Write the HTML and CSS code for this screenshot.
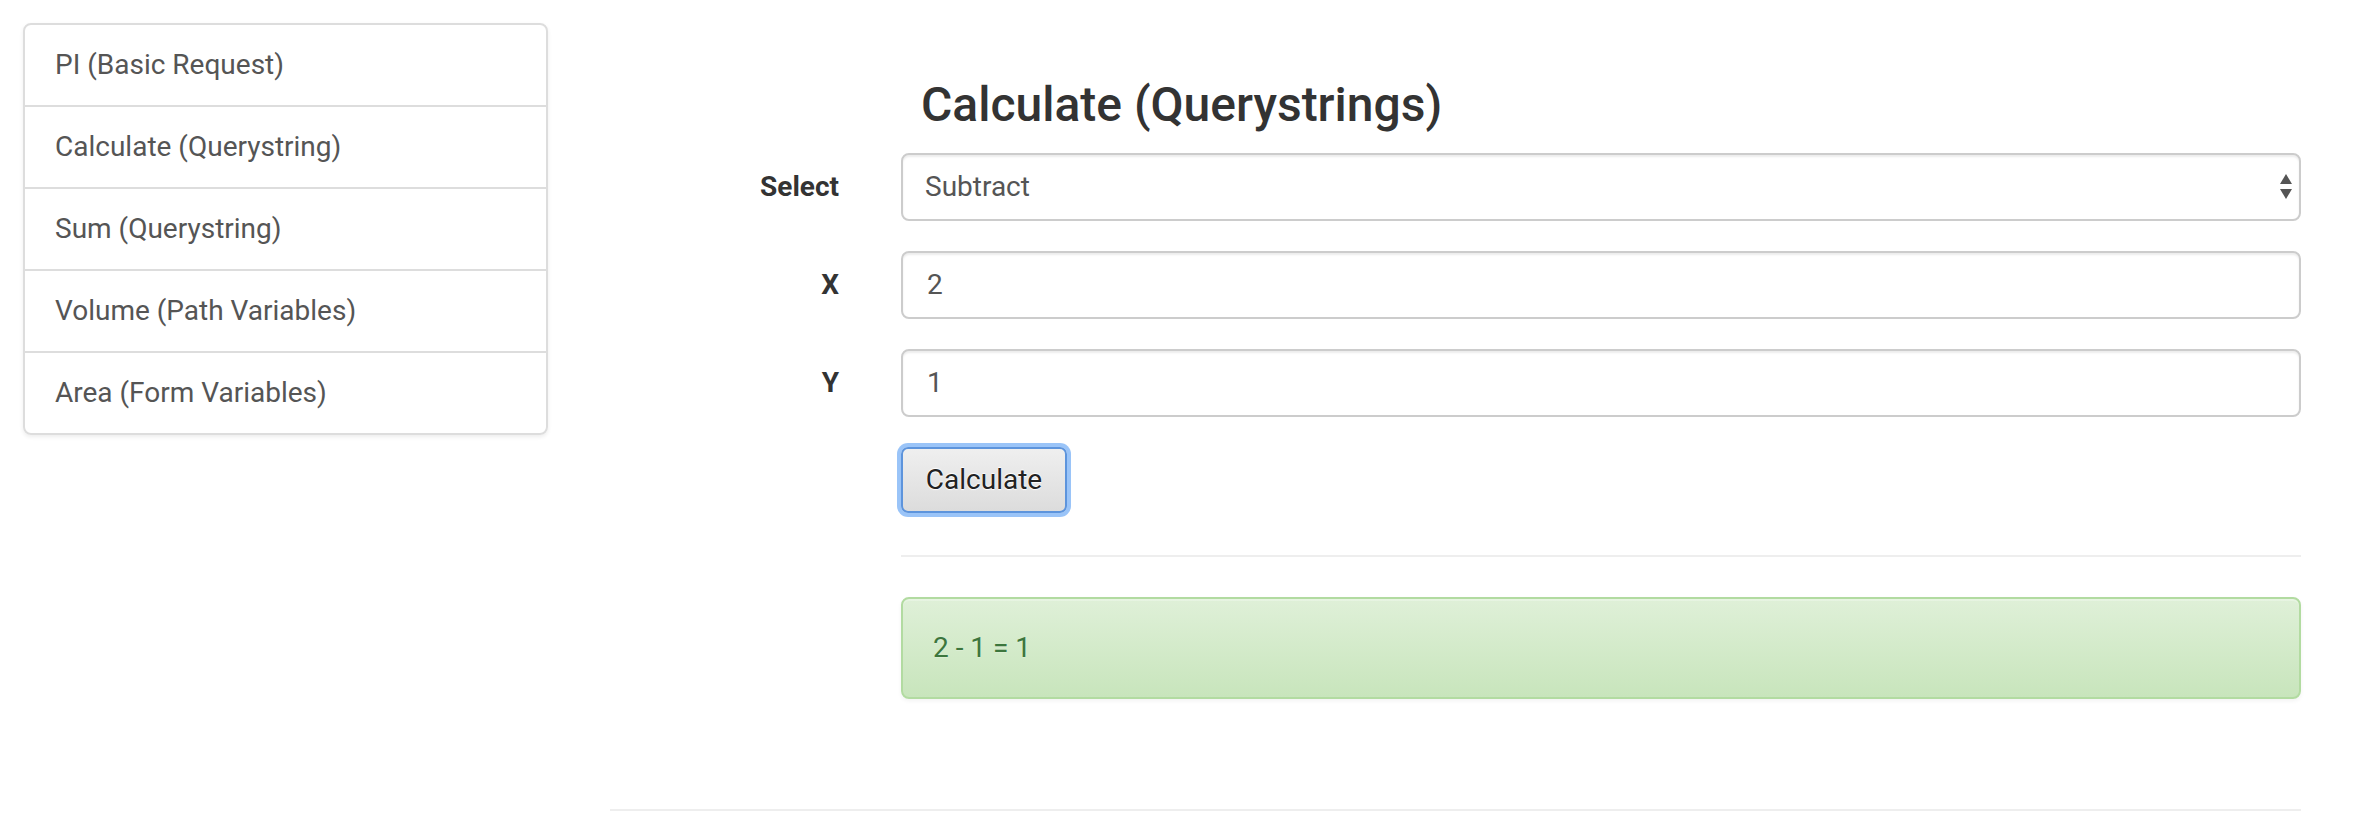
FILE: index.html
```html
<!DOCTYPE html>
<html>
<head>
<meta charset="utf-8">
<title>Calculate (Querystrings)</title>
<link rel="stylesheet" href="styles.css">
</head>
<body>
<div class="page">
  <aside class="sidebar">
    <ul class="list-group">
      <li class="list-item">PI (Basic Request)</li>
      <li class="list-item">Calculate (Querystring)</li>
      <li class="list-item">Sum (Querystring)</li>
      <li class="list-item">Volume (Path Variables)</li>
      <li class="list-item">Area (Form Variables)</li>
    </ul>
  </aside>
  <main class="main">
    <h3 class="title">Calculate (Querystrings)</h3>
    <form class="form">
      <div class="form-group">
        <label class="label">Select</label>
        <div class="control select-wrap">
          <select class="input select">
            <option>Subtract</option>
          </select>
          <svg class="select-arrows" width="14" height="28" viewBox="0 0 14 28">
            <path d="M7 1 L13 11 L1 11 Z" fill="#555"/>
            <path d="M1 16 L13 16 L7 26 Z" fill="#555"/>
          </svg>
        </div>
      </div>
      <div class="form-group">
        <label class="label">X</label>
        <div class="control"><input class="input" type="text" value="2"></div>
      </div>
      <div class="form-group">
        <label class="label">Y</label>
        <div class="control"><input class="input" type="text" value="1"></div>
      </div>
      <div class="form-group">
        <div class="label"></div>
        <div class="control"><button class="btn" type="button">Calculate</button></div>
      </div>
      <div class="form-group result-group">
        <div class="label"></div>
        <div class="control">
          <hr class="divider">
          <div class="alert">2 - 1 = 1</div>
        </div>
      </div>
    </form>
    <hr class="footer-rule">
  </main>
</div>
</body>
</html>
```

FILE: styles.css
```css
html, body {
  margin: 0;
  padding: 0;
  background: #fff;
}
body {
  font-family: Roboto, "Helvetica Neue", Arial, sans-serif;
  font-size: 28px;
  line-height: 40px;
  color: #333;
}
.page {
  display: flex;
  align-items: flex-start;
}
.sidebar {
  width: 525px;
  margin: 23px 0 0 23px;
  flex: none;
}
.list-group {
  list-style: none;
  margin: 0;
  padding: 0;
  border-radius: 8px;
  box-shadow: 0 2px 4px rgba(0,0,0,.075);
}
.list-item {
  padding: 20px 30px;
  border: 2px solid #ddd;
  margin-bottom: -2px;
  color: #555;
  background: #fff;
}
.list-item:first-child {
  border-top-left-radius: 8px;
  border-top-right-radius: 8px;
}
.list-item:last-child {
  border-bottom-left-radius: 8px;
  border-bottom-right-radius: 8px;
  margin-bottom: 0;
}
.main {
  width: 1691px;
  margin-left: 62px;
  flex: none;
  padding-top: 79px;
}
.title {
  margin: 0 0 21px 311px;
  font-size: 48px;
  line-height: 1.1;
  font-weight: 500;
  color: #333;
}
.form {
  margin: 0;
}
.form-group {
  display: flex;
  gap: 62px;
  margin-bottom: 30px;
}
.label {
  width: 229px;
  flex: none;
  text-align: right;
  font-weight: 700;
  padding-top: 14px;
  color: #333;
}
.control {
  width: 1400px;
  flex: none;
}
.select-wrap {
  position: relative;
}
.input {
  display: block;
  box-sizing: border-box;
  width: 100%;
  height: 68px;
  padding: 12px 24px;
  font-family: inherit;
  font-size: 28px;
  line-height: 40px;
  color: #555;
  background: #fff;
  border: 2px solid #ccc;
  border-radius: 8px;
  box-shadow: inset 0 2px 2px rgba(0,0,0,.075);
  outline: none;
  margin: 0;
}
.select {
  -webkit-appearance: none;
  appearance: none;
  padding-left: 22px;
}
.select-arrows {
  position: absolute;
  right: 8px;
  top: 20px;
  pointer-events: none;
}
.btn {
  display: block;
  box-sizing: border-box;
  width: 166px;
  height: 66px;
  margin: 0;
  padding: 0;
  font-family: inherit;
  font-size: 28px;
  line-height: 40px;
  color: #222;
  text-shadow: 0 1px 1px #fff, 0 -1px 1px #fff;
  background: linear-gradient(to bottom, #efefef 0%, #dcdcdc 100%);
  border: 2px solid #5d94dc;
  border-radius: 7px;
  box-shadow: 0 0 0 4px rgba(120, 176, 245, .75);
}
.result-group {
  padding-top: 12px;
  margin-bottom: 0;
}
.divider {
  margin: 0 0 40px 0;
  border: 0;
  border-top: 2px solid #eee;
  height: 0;
}
.alert {
  box-sizing: border-box;
  padding: 29px 30px;
  border: 2px solid #b2dba1;
  border-radius: 8px;
  color: #3c763d;
  background: linear-gradient(to bottom, #dff0d8 0%, #c8e5bc 100%);
  box-shadow: inset 0 2px 0 rgba(255,255,255,.25), 0 2px 4px rgba(0,0,0,.05);
  text-shadow: 0 1px 0 rgba(255,255,255,.2);
}
.footer-rule {
  margin: 110px 0 0 0;
  border: 0;
  border-top: 2px solid #eee;
  height: 0;
}
```
